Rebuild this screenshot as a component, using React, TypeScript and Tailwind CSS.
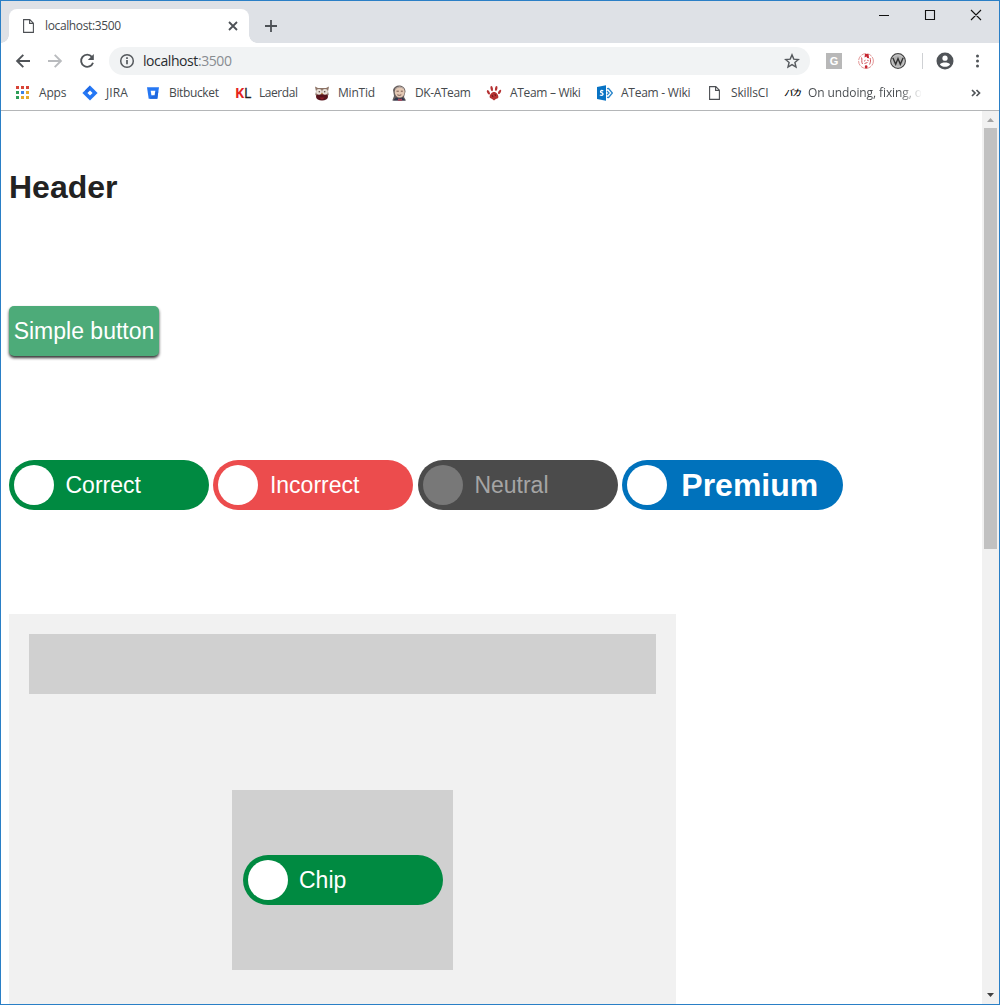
import React from 'react';

type IconProps = { children: React.ReactNode };

const Svg16 = ({ children }: IconProps) => (
  <svg width="16" height="16" viewBox="0 0 16 16" className="block shrink-0" fill="none">
    {children}
  </svg>
);

const PageIcon = () => (
  <Svg16>
    <path d="M2.6 1.6h6.2l3.6 3.6v9.2H2.6zM8.6 1.8v3.6h3.6" stroke="#4c4f53" strokeWidth="1.1" />
  </Svg16>
);

const AppsIcon = () => (
  <Svg16>
    <path d="M1 1h3v3H1zM6 1h3v3H6zM11 1h3v3h-3z" fill="#d84437" />
    <path d="M1 6h3v3H1zM1 11h3v3H1z" fill="#2e9d57" />
    <path d="M6 6h3v3H6z" fill="#3e82e4" />
    <path d="M11 6h3v3h-3zM6 11h3v3H6zM11 11h3v3h-3z" fill="#e5a92c" />
  </Svg16>
);

const JiraIcon = () => (
  <Svg16>
    <path d="M8 .4 15.6 8 8 15.6.4 8z" fill="#2477f5" />
    <path d="M8 .4v5L5.5 8 3 5.4z" fill="#1f6ae6" />
    <path d="M8 5.4 10.6 8 8 10.6 5.4 8z" fill="#fff" />
  </Svg16>
);

const BitbucketIcon = () => (
  <Svg16>
    <path d="M2 2.2h12l-1.700 11.500H3.700z" fill="#2677f3" />
    <path d="m8 10.5 2.8-4h2.500l-1 7.200H4.5z" fill="#1f68de" />
    <path d="M5.700 5.800h4.600l-.7 4.400H6.400z" fill="#fff" />
  </Svg16>
);

const LaerdalIcon = () => (
  <span className="flex h-4 w-4 shrink-0 items-center font-['Open_Sans',sans-serif] text-[14px] leading-4 tracking-[-0.4px]">
    <b className="text-[#e5241d]">K</b>
    <span className="text-[#222] [-webkit-text-stroke:0.300px_#222]">L</span>
  </span>
);

const OwlIcon = () => (
  <Svg16>
    <path d="M1 1.500 4 3h8l3-1.500-1 5 .7 3L12 14H4L1.300 9.500 2 6.500z" fill="#8d7467" />
    <ellipse cx="8" cy="11.800" rx="6" ry="3.800" fill="#57141c" />
    <circle cx="5" cy="6.800" r="2.900" fill="#e9e1d8" />
    <circle cx="11" cy="6.800" r="2.900" fill="#e9e1d8" />
    <circle cx="5.300" cy="6.800" r=".8" fill="#5d4842" />
    <circle cx="10.700" cy="6.800" r=".8" fill="#5d4842" />
    <path d="m7 8 1 2 1-2z" fill="#c39654" />
    <path d="M5.500 12.500h5L9 14.300H7z" fill="#8c1c26" />
  </Svg16>
);

const FaceIcon = () => (
  <Svg16>
    <path d="M2 5C3 1.500 6 0 9 .5c3 .3 5.500 3 5.500 6L13 12l2 3.500H1.300L3 11z" fill="#675f5e" />
    <ellipse cx="8.700" cy="7" rx="5" ry="5.500" fill="#e3c8b4" />
    <path d="M4 4.300Q8 .5 12.600 3.500" stroke="#b0a49f" />
    <path d="M5.500 6.200h2.300m2 0h2M6.300 9.800q2 1.200 4 0" stroke="#6b4b42" strokeWidth=".9" />
    <path d="m2 15.500 3-3 3.500 1 3-1 3 3z" fill="#30374d" />
    <path d="m7 13.500 2 .8 2-.8v2.200H7z" fill="#a7435a" />
  </Svg16>
);

const PawIcon = () => (
  <Svg16>
    <g fill="#b53233">
      <path d="M8 7c2.500 0 4.400 2.800 4.400 5 0 1.700-1.900 1.500-2.900 2.200L8 15.500l-1.500-1.300c-1-.8-2.900-.7-2.900-2.200C3.600 9.800 5.600 7 8 7z" />
      <ellipse cx="5.700" cy="3.600" rx="1.200" ry="2.600" transform="rotate(-12 5.700 3.600)" />
      <ellipse cx="10.200" cy="3.400" rx="1.200" ry="2.500" transform="rotate(12 10.200 3.400)" />
      <ellipse cx="2.400" cy="7.300" rx="1.200" ry="2.400" transform="rotate(-30 2.400 7.300)" />
      <ellipse cx="13.600" cy="6.900" rx="1.200" ry="2.400" transform="rotate(30 13.600 6.900)" />
    </g>
    <path d="m6 10 1 2m2-3 .5 2" stroke="#681719" />
  </Svg16>
);

const SharePointIcon = () => (
  <Svg16>
    <path d="M0 2 9 .2v15.600L0 14z" fill="#0873c4" />
    <path d="M6.300 5.800c-2.700-1-3.600 1-1.800 1.900 2.700 1.200 1.600 3.300-1.700 2.300" stroke="#fff" strokeWidth="1.300" />
    <path d="m10 3.700 1.600-.2L15.300 8l-3.700 4.500-1.600-.2M10 6l2 2-2 2" stroke="#2a86cb" strokeWidth="1.300" />
  </Svg16>
);

const BakaIcon = () => (
  <span className="flex h-4 w-4 shrink-0 items-center font-['Noto_Sans_CJK_JP',sans-serif] text-[9px] leading-4 font-medium text-black italic tracking-[-1px]">
    バカ
  </span>
);

type Bookmark = { label: string; icon: React.ReactNode; width: string; text: string };

const bookmarks: Bookmark[] = [
  { label: 'Apps', icon: <AppsIcon />, width: 'w-[67px]', text: 'tracking-[-0.2px]' },
  { label: 'JIRA', icon: <JiraIcon />, width: 'w-[63px]', text: 'tracking-[0.1px]' },
  { label: 'Bitbucket', icon: <BitbucketIcon />, width: 'w-[90px]', text: 'tracking-[-0.36px]' },
  { label: 'Laerdal', icon: <LaerdalIcon />, width: 'w-[79px]', text: 'tracking-[-0.45px]' },
  { label: 'MinTid', icon: <OwlIcon />, width: 'w-[77px]', text: 'tracking-[-0.2px]' },
  { label: 'DK-ATeam', icon: <FaceIcon />, width: 'w-[95px]', text: 'tracking-[-0.4px]' },
  { label: 'ATeam – Wiki', icon: <PawIcon />, width: 'w-[111px]', text: 'tracking-[-0.32px]' },
  { label: 'ATeam - Wiki', icon: <SharePointIcon />, width: 'w-[110px]', text: 'tracking-[-0.25px]' },
  { label: 'SkillsCI', icon: <PageIcon />, width: 'w-[77px]', text: 'tracking-[-0.15px]' },
];

const TabStrip = () => (
  <div className="flex h-[42px] shrink-0 items-start bg-[#dee1e6]">
    <div className="relative mt-2 ml-2 flex h-[34px] w-60 items-center rounded-t-lg bg-white pr-[10px] pl-3">
      <PageIcon />
      <span className="ml-2 flex-1 font-['Open_Sans',sans-serif] text-[12px] tracking-[-0.37px] text-[#45494d]">
        localhost:3500
      </span>
      <svg width="12" height="12" viewBox="0 0 12 12" fill="none" stroke="#4d5156" strokeWidth="1.8">
        <path d="m2 2 8 8M10 2l-8 8" />
      </svg>
      <span className="absolute bottom-0 -left-2 h-2 w-2 bg-[radial-gradient(circle_at_0_0,transparent_7.500px,#fff_8px)]" />
      <span className="absolute -right-2 bottom-0 h-2 w-2 bg-[radial-gradient(circle_at_100%_0,transparent_7.500px,#fff_8px)]" />
    </div>
    <svg className="mt-[18px] ml-[15px]" width="14" height="14" viewBox="0 0 14 14" stroke="#4d5156" strokeWidth="1.800">
      <path d="M7 1v12M1 7h12" />
    </svg>
    <svg className="mt-2 mr-[17px] ml-auto" width="104" height="14" viewBox="0 0 104 14" fill="none" stroke="#111" strokeWidth="1.100">
      <path d="M1 6.500h10M47.500 1.500h9v9h-9zM93 1l10 10M103 1 93 11" />
    </svg>
  </div>
);

const Toolbar = () => (
  <div className="flex h-9 shrink-0 items-center pl-[14px]">
    <svg width="16" height="16" viewBox="0 0 16 16" fill="none" stroke="#505458" strokeWidth="1.900">
      <path d="M15 8H2.500M8.300 1.800 2.100 8l6.200 6.200" />
    </svg>
    <svg className="ml-4" width="16" height="16" viewBox="0 0 16 16" fill="none" stroke="#b9bbbe" strokeWidth="1.900">
      <path d="M1 8h12.500M7.700 1.800 13.900 8l-6.200 6.200" />
    </svg>
    <svg className="ml-4" width="16" height="16" viewBox="0 0 16 16" fill="none" stroke="#505458" strokeWidth="1.900">
      <path d="M12.900 3.800A6.100 6.100 0 1 0 14 9.700" />
      <path d="M14.800 1v6H8.800z" fill="#505458" stroke="none" />
    </svg>
    <div className="ml-[14px] flex h-7 w-[701px] items-center rounded-full bg-[#f1f3f4] pr-[10px] pl-[10px]">
      <svg width="16" height="16" viewBox="0 0 16 16" fill="none" stroke="#55595d" strokeWidth="1.500">
        <circle cx="8" cy="8" r="6.300" />
        <path d="M8 7v4.300M8 4.300v1.600" strokeWidth="1.700" />
      </svg>
      <span className="ml-2 flex-1 pb-px font-['Open_Sans',sans-serif] text-[14px] tracking-[-0.42px] text-[#292c30]">
        localhost<span className="text-[#888c91]">:3500</span>
      </span>
      <svg width="16" height="16" viewBox="0 0 16 16" fill="none" stroke="#55595d" strokeWidth="1.400">
        <path d="m8 1.900 1.800 4.200 4.600.4-3.500 3 1.100 4.500-4-2.400L4 14l1.100-4.500-3.500-3 4.600-.4z" />
      </svg>
    </div>
    <span className="ml-4 flex h-4 w-4 items-center justify-center bg-[#b8b8b8] font-['Liberation_Sans',sans-serif] text-[11px] leading-4 font-bold text-white">
      G
    </span>
    <svg className="ml-4" width="16" height="16" viewBox="0 0 16 16" fill="none">
      <circle cx="8" cy="8" r="7.400" stroke="#df8a8a" strokeWidth=".9" strokeDasharray="5 1" />
      <path d="M7 1h3.500l.6 4.200-2-.3-.6-1.500-2 1zM6.800 13 8 12l1.500 1-.3 2.500h-2z" fill="#c72530" />
      <path d="M3.500 4.500c1 2-.5 4 1 6.500M12 5c.8 2 .7 4-.4 6.500M6 8.300l1.500-1.100m1.700 0 1.500.6M6.500 10.500l3-1" stroke="#d0565d" strokeWidth="1" />
    </svg>
    <svg className="ml-4" width="16" height="16" viewBox="0 0 16 16" fill="none">
      <circle cx="8" cy="8" r="7.300" fill="#b3b3b3" stroke="#474747" strokeWidth="1.300" />
      <circle cx="8" cy="8" r="6.200" stroke="#ddd" strokeWidth=".6" />
      <path d="M2.800 4.800 5.700 11.200 8 5.500l2.300 5.700 2.900-6.400" stroke="#303030" strokeWidth="1.400" />
    </svg>
    <span className="ml-4 h-4 w-px bg-[#cfd1d4]" />
    <svg className="ml-[13px]" width="18" height="18" viewBox="0 0 18 18">
      <circle cx="9" cy="9" r="8.500" fill="#505458" />
      <circle cx="9" cy="6.200" r="2.600" fill="#fff" />
      <path d="M3.900 12.500C5.500 9.900 12.500 9.900 14.100 12.500 12 15.600 6 15.600 3.900 12.500z" fill="#fff" />
    </svg>
    <svg className="ml-[21px]" width="4" height="16" viewBox="0 0 4 16" fill="#505458">
      <circle cx="2.500" cy="3" r="1.500" />
      <circle cx="2.500" cy="8" r="1.500" />
      <circle cx="2.500" cy="13" r="1.500" />
    </svg>
  </div>
);

const BookmarksBar = () => (
  <div className="flex h-8 shrink-0 items-center border-b border-[#b4b6b8] pb-[3px] pl-[14px] font-['Open_Sans',sans-serif] text-[12px] whitespace-nowrap text-[#45494d]">
    {bookmarks.map((b) => (
      <div key={b.label} className={'flex shrink-0 items-center gap-2 ' + b.width}>
        {b.icon}
        <span className={b.text}>{b.label}</span>
      </div>
    ))}
    <div className="flex w-[137px] shrink-0 items-center gap-2 overflow-hidden">
      <BakaIcon />
      <span className="bg-linear-to-r from-[#45494d] from-80% to-transparent to-100% bg-clip-text tracking-[-0.1px] text-transparent">
        On undoing, fixing, o
      </span>
    </div>
    <svg className="ml-[50px]" width="10" height="8" viewBox="0 0 10 8" fill="none" stroke="#505458" strokeWidth="1.700">
      <path d="m1 1 3 3-3 3M5.500 1l3 3-3 3" />
    </svg>
  </div>
);

type ChipProps = { label: string; color: string; dot?: string; text?: string; width?: string };

const Chip = ({
  label,
  color,
  dot = 'bg-white',
  text = 'ml-[11.500px] text-[23px] text-white',
  width = 'w-[200px]',
}: ChipProps) => (
  <div className={'flex h-[50px] shrink-0 items-center rounded-full pl-[5px] ' + color + ' ' + width}>
    <span className={'h-10 w-10 shrink-0 rounded-full ' + dot} />
    <span className={text}>{label}</span>
  </div>
);

const Scrollbar = () => (
  <div className="flex w-[17px] shrink-0 flex-col items-center bg-[#f1f1f1]">
    <svg className="block shrink-0" width="17" height="17" viewBox="0 0 17 17">
      <path d="M5 11h7L8.500 7z" fill="#a3a3a3" />
    </svg>
    <div className="h-[421px] w-[13px] bg-[#c1c1c1]" />
    <svg className="mt-auto block shrink-0" width="17" height="17" viewBox="0 0 17 17">
      <path d="M5 6h7l-3.500 4z" fill="#404040" />
    </svg>
  </div>
);

export default function App() {
  return (
    <div className="flex h-[1005px] w-[1000px] flex-col overflow-hidden border border-[#2a7fc6] bg-white">
      <TabStrip />
      <Toolbar />
      <BookmarksBar />
      <div className="flex min-h-0 flex-1">
        <main className="min-w-0 flex-1 overflow-hidden pl-2 font-['Liberation_Sans',Arial,sans-serif]">
          <h1 className="mt-[58px] text-[32px] leading-[37px] font-bold text-[#222]">Header</h1>
          <button className="mt-[100px] flex h-[50px] w-[150px] items-center justify-center rounded-[5px] bg-[#4dab79] text-[23px] whitespace-nowrap text-white shadow-[0_2px_3px_rgba(0,0,0,0.800)]">
            Simple button
          </button>
          <div className="mt-[104px] flex gap-[4.450px]">
            <Chip label="Correct" color="bg-[#008a41]" />
            <Chip label="Incorrect" color="bg-[#ec4c4d]" />
            <Chip label="Neutral" color="bg-[#4b4b4b]" dot="bg-[#787878]" text="ml-[11.500px] text-[23px] text-[#a5a5a5]" />
            <Chip label="Premium" color="bg-[#0072bc]" width="w-[221px]" text="ml-[14px] text-[32px] font-bold text-white" />
          </div>
          <section className="mt-[104px] flex h-[420px] w-[667px] flex-col items-center bg-[#f1f1f1] p-5">
            <div className="h-[60px] w-full shrink-0 bg-[#d0d0d0]" />
            <div className="mt-24 flex h-[180px] w-[221px] shrink-0 items-center justify-center bg-[#d0d0d0]">
              <Chip label="Chip" color="bg-[#008a41]" />
            </div>
          </section>
        </main>
        <Scrollbar />
      </div>
    </div>
  );
}
